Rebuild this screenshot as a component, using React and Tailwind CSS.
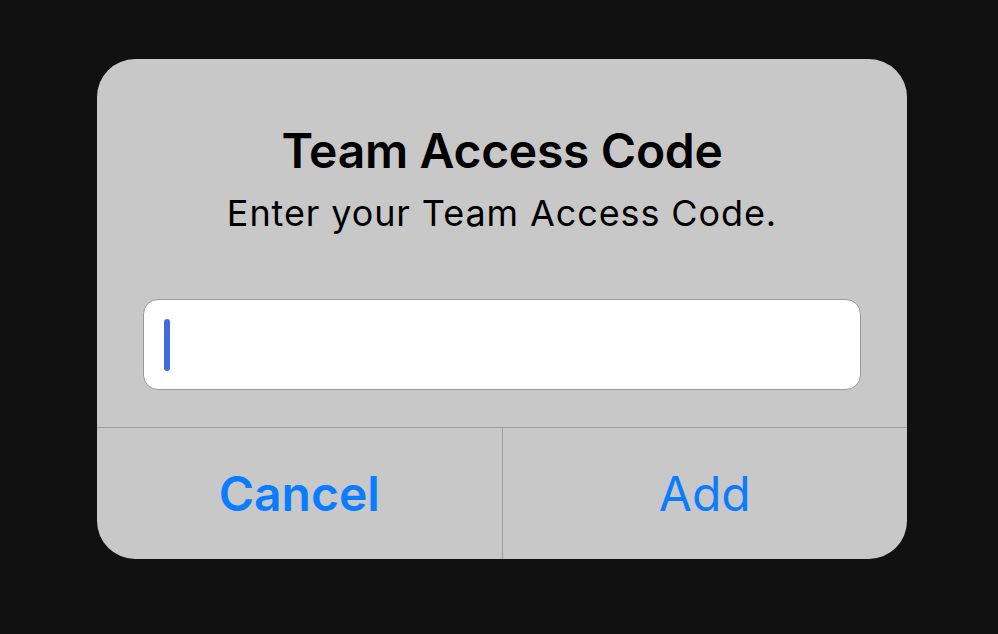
export default function App() {
    return (
        <main className="min-h-[634px] bg-[#111111] pt-[59px] pl-[97px]" style={{ fontFamily: "Inter, 'Noto Sans', sans-serif" }}>
            <div className="flex h-[500px] w-[810px] flex-col overflow-hidden rounded-[38px] bg-[#c8c8c8]">
                <div className="flex h-[368px] flex-col items-center px-[46px]">
                    <h1 className="mt-[62px] text-[48px] font-semibold leading-[60px] tracking-[-0.3px] text-black">Team Access Code</h1>
                    <p className="mt-[12px] text-[36px] leading-[40px] tracking-[0.9px] text-black">Enter your Team Access Code.</p>
                    <div className="mt-[66px] flex h-[91px] w-full items-center rounded-[15px] border border-[#9a9a9a] bg-white px-[20px]">
                        <span className="h-[52px] w-[6px] rounded-full bg-[#4169e1]" />
                    </div>
                </div>
                <div className="flex flex-1 border-t border-[#9e9e9e]">
                    <button className="flex flex-1 items-center justify-center border-r border-[#9e9e9e] text-[48px] font-semibold text-[#0a7cff]">Cancel</button>
                    <button className="flex flex-1 items-center justify-center text-[48px] text-[#0a7cff]">Add</button>
                </div>
            </div>
        </main>
    )
}
